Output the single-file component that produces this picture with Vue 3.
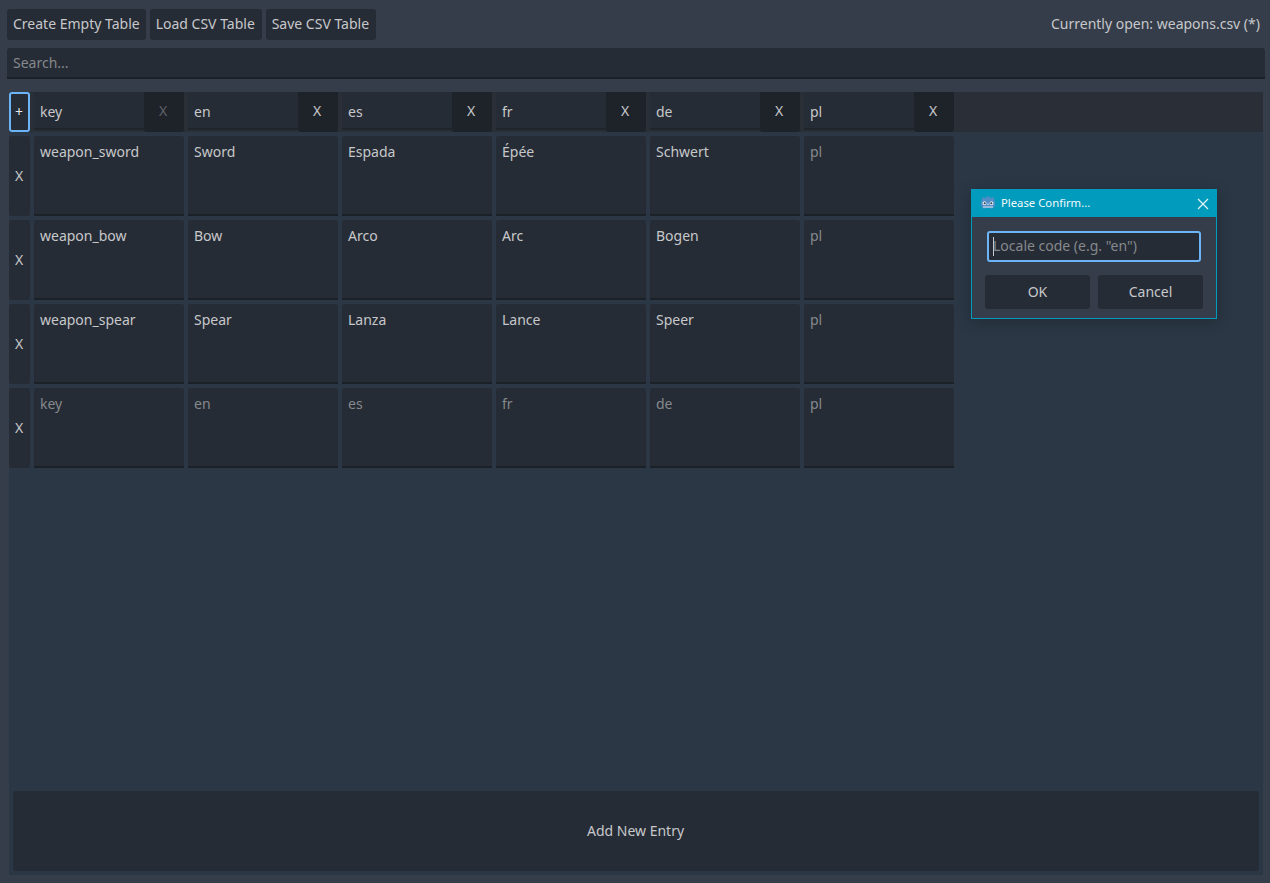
<script setup>
const locales = ['en', 'es', 'fr', 'de', 'pl']
const headers = [
  { name: 'key', off: true },
  ...locales.map((name) => ({ name, off: false })),
]
const rows = [
  ['weapon_sword', 'Sword', 'Espada', 'Épée', 'Schwert', ''],
  ['weapon_bow', 'Bow', 'Arco', 'Arc', 'Bogen', ''],
  ['weapon_spear', 'Spear', 'Lanza', 'Lance', 'Speer', ''],
  ['', '', '', '', '', ''],
]
const cols = ['key', ...locales]
</script>

<template>
  <div class="app">
    <div class="toolbar">
      <button class="btn create">Create Empty Table</button>
      <button class="btn load">Load CSV Table</button>
      <button class="btn save">Save CSV Table</button>
      <span class="status">Currently open: weapons.csv (*)</span>
    </div>
    <div class="search">Search...</div>
    <div class="table">
      <div class="head">
        <button class="add">+</button>
        <div v-for="h in headers" :key="h.name" class="hcell">
          <span class="hname">{{ h.name }}</span>
          <span class="hx" :class="{ off: h.off }">X</span>
        </div>
      </div>
      <div class="body">
        <div class="rows">
          <div v-for="(r, i) in rows" :key="i" class="row">
            <button class="rowx">X</button>
            <div v-for="(c, j) in r" :key="j" class="cell" :class="{ ph: !c }">{{ c || cols[j] }}</div>
          </div>
        </div>
        <button class="newentry">Add New Entry</button>
      </div>
    </div>

    <div class="dialog">
      <div class="title">
        <svg class="logo" width="16" height="16" viewBox="0 0 16 16">
          <path fill="#4f8dc6" d="M1 6.500 2 5.300 1.500 3.200 3.500 2 5 3h.7l.3-1.500h4l.3 1.500H11l1.500-1 2 1.200-.5 2.100 1 1.200V11.500l-1.500.4-.3 1.400-2.200.7-.5-1H5l-.5 1-2.200-.7L2 11.900.9 11.500z"/>
          <path fill="#dfe9f2" d="M2.500 8.200a2 2 0 1 1 4 0 2 2 0 0 1-4 0zM9.500 8.200a2 2 0 1 1 4 0 2 2 0 0 1-4 0zM7.400 8.500h1.200v1.500H7.400zM3 11.500h10v1H3z"/>
          <path fill="#33404e" d="M3.700 8.300a1 1 0 1 1 2 0 1 1 0 0 1-2 0zM10.300 8.300a1 1 0 1 1 2 0 1 1 0 0 1-2 0z"/>
        </svg>
        <span class="ttext">Please Confirm...</span>
        <svg class="close" width="12" height="12" viewBox="0 0 12 12">
          <path d="M1 1l10 10M11 1L1 11" stroke="#e8f4f8" stroke-width="1.200" fill="none"/>
        </svg>
      </div>
      <div class="dbody">
        <div class="dinput"><i class="caret"></i>Locale code (e.g. "en")</div>
        <div class="dbtns">
          <button class="dbtn">OK</button>
          <button class="dbtn">Cancel</button>
        </div>
      </div>
    </div>
  </div>
</template>

<style>
html, body { margin: 0; background: #363d4a; }
</style>

<style scoped>
.app {
  position: relative;
  box-sizing: border-box;
  width: 1270px;
  height: 883px;
  padding: 9px 5px 8px 7px;
  display: flex;
  flex-direction: column;
  background: #363d4a;
  font-family: "Noto Sans", sans-serif;
  font-size: 14px;
  color: #c6c8cb;
  overflow: hidden;
}
button { font: inherit; color: inherit; border: 0; padding: 0 0 2px; margin: 0; }
.toolbar { display: flex; gap: 4px; height: 31px; align-items: stretch; }
.btn {
  background: #262c35;
  border-radius: 3px;
  padding: 0 6px 2px;
  text-align: left;
}
.load { width: 112px; }
.save { width: 110px; }
.status { margin-left: auto; margin-right: 5px; align-self: center; padding-bottom: 2px; }
.search {
  margin-top: 8px;
  height: 29px;
  line-height: 29px;
  padding: 0 6px;
  background: #262c35;
  border-bottom: 2px solid #1c2027;
  border-radius: 3px 3px 0 0;
  color: #85888c;
}
.table {
  margin: 13px 2px 0;
  flex: 1;
  display: flex;
  flex-direction: column;
  background: #2b3745;
  min-height: 0;
}
.head {
  height: 40px;
  background: #2a2e37;
  display: flex;
  gap: 4px;
}
.add {
  box-sizing: border-box;
  width: 21px;
  background: #262c35;
  border: 2px solid #6cb4f5;
  border-radius: 3px;
  color: #e6e8ea;
  padding: 0 1px 2px 0;
}
.hcell { width: 150px; display: flex; background: #2a2e37; }
.hname {
  box-sizing: border-box;
  width: 110px;
  height: 38px;
  line-height: 40px;
  padding: 0 6px;
  background: #262c35;
  border-bottom: 2px solid #20242b;
}
.hx {
  box-sizing: border-box;
  width: 40px;
  text-align: center;
  line-height: 38px;
  padding-right: 2px;
  background: #1e2229;
  border-radius: 0 0 3px 3px;
}
.hx.off { color: #5e6166; }
.body {
  flex: 1;
  display: flex;
  flex-direction: column;
  justify-content: space-between;
  padding-top: 4px;
  padding-bottom: 4px;
}
.rows { display: flex; flex-direction: column; gap: 4px; }
.row { display: flex; gap: 4px; height: 80px; }
.rowx { width: 21px; background: #262c35; border-radius: 3px; padding: 0 1px 2px 0; }
.cell {
  box-sizing: border-box;
  width: 150px;
  height: 80px;
  padding: 6px 6px 0;
  line-height: 20px;
  background: #262c35;
  border-bottom: 2px solid #1c2027;
  border-radius: 3px 3px 0 0;
}
.cell.ph { color: #85888c; }
.newentry {
  margin: 0 4px;
  height: 80px;
  background: #262c35;
  border-radius: 3px;
  padding: 0 1px 2px 0;
}
.dialog {
  position: absolute;
  left: 971px;
  top: 189px;
  box-sizing: border-box;
  width: 246px;
  height: 130px;
  border: 1px solid #009bbd;
  background: #363d4a;
  box-shadow: 0 3px 14px rgba(0, 0, 0, 0.22);
  display: flex;
  flex-direction: column;
}
.title {
  height: 27px;
  background: #009bbd;
  display: flex;
  align-items: center;
  padding: 0 7px 2px 8px;
  box-sizing: border-box;
  color: #f2fafc;
  font-size: 11.3px;
  flex: none;
}
.logo { flex: none; }
.ttext { margin-left: 5px; flex: 1; }
.close { flex: none; position: relative; top: 1px; }
.dbody {
  flex: 1;
  padding: 14px 13px 0;
  display: flex;
  flex-direction: column;
}
.dinput {
  position: relative;
  box-sizing: border-box;
  margin: 0 2px;
  height: 31px;
  line-height: 25px;
  padding-left: 4px;
  background: #262c35;
  border: 2px solid #6cb4f5;
  border-radius: 3px;
  color: #85888c;
  white-space: nowrap;
}
.caret {
  position: absolute;
  left: 4px;
  top: 4px;
  width: 1px;
  height: 19px;
  background: #c6c8cb;
}
.dbtns { display: flex; gap: 8px; margin-top: 13px; }
.dbtn { width: 105px; height: 34px; background: #262c35; border-radius: 3px; }
</style>
